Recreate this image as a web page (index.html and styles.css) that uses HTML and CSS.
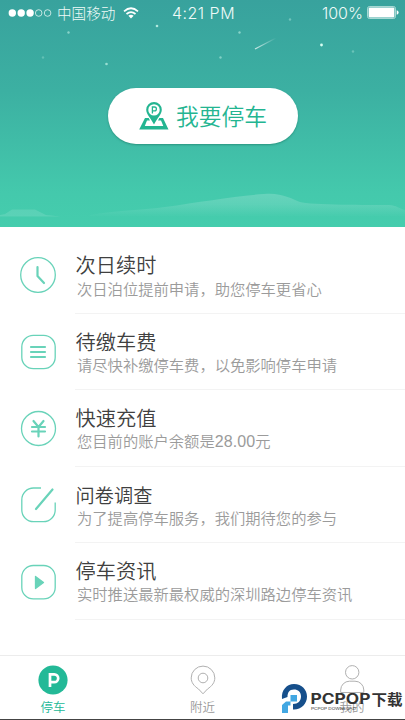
FILE: index.html
```
<!DOCTYPE html>
<html lang="zh-CN">
<head>
<meta charset="utf-8">
<title>停车</title>
<link rel="stylesheet" href="styles.css">
</head>
<body>
<div class="app">
  <header class="hero">
    <svg class="scene" viewBox="0 0 405 227" aria-hidden="true">
      <defs>
        <linearGradient id="hill" gradientUnits="userSpaceOnUse" x1="0" y1="193" x2="0" y2="217">
          <stop offset="0" stop-color="#fff" stop-opacity=".19"/>
          <stop offset=".45" stop-color="#fff" stop-opacity=".14"/>
          <stop offset="1" stop-color="#fff" stop-opacity="0"/>
        </linearGradient>
        <linearGradient id="trail" gradientUnits="userSpaceOnUse" x1="255" y1="49" x2="276" y2="38">
          <stop offset="0" stop-color="#fff" stop-opacity=".75"/>
          <stop offset="1" stop-color="#fff" stop-opacity="0"/>
        </linearGradient>
      </defs>
      <path d="M90 215C120 210 145 210 165 207C200 202 235 196 264 194C280 192 293 199 300 202C310 205 370 205 389 205C396 205 400 209 405 210V218H90Z" fill="url(#hill)"/>
      <path d="M0 215L5 214L12 209.500H35L46 215L61 216.500H0Z" fill="#fff" opacity=".12"/>
      <path d="M255 49L276 38" stroke="url(#trail)" stroke-width="1.200"/>
      <g fill="#d9fff3">
        <circle cx="68.500" cy="32.500" r="1.200" opacity=".5"/>
        <circle cx="157" cy="26" r="1.300" opacity=".75"/>
        <circle cx="106.500" cy="64" r="1.300" opacity=".6"/>
        <circle cx="43" cy="57.500" r="1.200" opacity=".25"/>
        <circle cx="239.500" cy="32.500" r="1.200" opacity=".5"/>
        <circle cx="290" cy="19.500" r="1.200" opacity=".35"/>
        <circle cx="220.500" cy="57.500" r="1.200" opacity=".45"/>
        <circle cx="321.500" cy="45" r="1.400"/>
        <circle cx="353" cy="51.500" r="1.200" opacity=".3"/>
      </g>
    </svg>
    <div class="status">
      <div class="carrier">
        <svg width="44" height="10" viewBox="0 0 44 10"><g fill="#fff"><circle cx="4.300" cy="5" r="3.700"/><circle cx="13.200" cy="5" r="3.700"/><circle cx="22.100" cy="5" r="3.700"/></g><g fill="none" stroke="#e6f5f3" stroke-width=".8"><circle cx="30.700" cy="5" r="3.300"/><circle cx="39.600" cy="5" r="3.300"/></g></svg>
        <span class="carrier-name">中国移动</span>
        <svg width="16" height="12" viewBox="0 0 16 12"><g fill="none" stroke="#fff" stroke-width="1.700"><path d="M1 4.300Q8 -1.800 15 4.300"/><path d="M3.500 7Q8 3.200 12.500 7"/></g><path d="M5.400 8.800Q8 6.700 10.600 8.800L8 11.600Z" fill="#fff"/></svg>
      </div>
      <span class="clock">4:21 PM</span>
      <div class="power">
        <span>100%</span>
        <svg width="32" height="13" viewBox="0 0 32 13"><rect x=".5" y=".5" width="28" height="12" rx="2" fill="none" stroke="#d5efeb" stroke-width=".7"/><rect x="1.600" y="1.600" width="25.800" height="9.800" rx="1" fill="#fff"/><path d="M29.700 4.200Q31.600 4.600 31.600 6.500T29.700 8.800Z" fill="#fff"/></svg>
      </div>
    </div>
    <button class="park">
      <svg width="30" height="28" viewBox="0 0 30 28"><path d="M6 16H9.700L11 18.500H8L5.800 24H24.300L22 18.500H19L20.300 16H24L29.500 27.500H.2Z" fill="#23b591"/><path fill-rule="evenodd" d="M15 0A7.800 7.800 0 0 0 7.200 7.800C7.200 12.800 12.300 16.800 15 22.500C17.700 16.800 22.800 12.800 22.800 7.800A7.800 7.800 0 0 0 15 0ZM15 2.200A5.700 5.700 0 1 1 15 13.600A5.700 5.700 0 0 1 15 2.200Z" fill="#23b591"/><path d="M13.400 11.500V5H15.500A1.900 1.900 0 0 1 15.500 8.800H13.400" fill="none" stroke="#23b591" stroke-width="1.300"/></svg>
      <span>我要停车</span>
    </button>
  </header>

  <main class="list">
    <section class="row first">
      <svg class="icon" viewBox="0 0 38 38"><circle cx="19" cy="19" r="17.300"/><path class="bold" d="M18.500 11V20L25 27"/></svg>
      <div class="copy"><h2>次日续时</h2><p>次日泊位提前申请，助您停车更省心</p></div>
    </section>
    <section class="row">
      <svg class="icon" viewBox="0 0 38 38"><rect x="2.800" y="3.300" width="33.400" height="33.400" rx="11.500"/><path class="bold" d="M12 15H26M12 20H26M12 25H26"/></svg>
      <div class="copy"><h2>待缴车费</h2><p>请尽快补缴停车费，以免影响停车申请</p></div>
    </section>
    <section class="row">
      <svg class="icon" viewBox="0 0 38 38"><circle cx="19.500" cy="19.500" r="17"/><path class="bold" d="M14.500 12L19.500 18L24.500 12M13 18H26M13 22.500H26M19.500 18V27.500"/></svg>
      <div class="copy"><h2>快速充值</h2><p>您目前的账户余额是<span class="amount">28.00</span>元</p></div>
    </section>
    <section class="row">
      <svg class="icon" viewBox="0 0 38 38"><path d="M22 3H14.500A11.700 11.700 0 0 0 2.800 14.700V25A11.700 11.700 0 0 0 14.500 36.700H24.500A11.700 11.700 0 0 0 36.200 25V17.500"/><path class="bold" d="M17 24L33.500 4.500"/></svg>
      <div class="copy"><h2 class="narrow">问卷调查</h2><p>为了提高停车服务，我们期待您的参与</p></div>
    </section>
    <section class="row">
      <svg class="icon" viewBox="0 0 38 38"><rect x="2.800" y="3.500" width="33.400" height="33.400" rx="11.500"/><path d="M16.500 14.500V26.500L24.500 20.500Z" class="solid"/></svg>
      <div class="copy"><h2>停车资讯</h2><p>实时推送最新最权威的深圳路边停车资讯</p></div>
    </section>
  </main>

  <nav class="tabs">
    <a class="tab active">
      <svg width="30" height="30" viewBox="0 0 30 30"><circle cx="15" cy="15" r="14.600" fill="#23b997"/><path d="M12 22V9.300H16.300A3.900 3.900 0 0 1 16.300 17.100H12" fill="none" stroke="#fff" stroke-width="2.700"/></svg>
      <span>停车</span>
    </a>
    <a class="tab">
      <svg width="30" height="30" viewBox="0 0 30 30"><g fill="none" stroke="#b0b0b0"><path d="M15 28.800L10.500 24C6 21 3.200 17.500 3.200 12.900A11.800 11.800 0 0 1 26.800 12.900C26.800 17.500 24 21 19.500 24Z"/><circle cx="15" cy="13" r="4.800"/></g></svg>
      <span>附近</span>
    </a>
    <a class="tab">
      <svg width="30" height="30" viewBox="0 0 30 30"><g fill="none" stroke="#b0b0b0"><circle cx="15.200" cy="7.300" r="6.700"/><path d="M3.700 27.500V25A8.800 8.800 0 0 1 12.500 16.200H18A8.800 8.800 0 0 1 26.800 25V27.500Z"/></g></svg>
      <span>我的</span>
    </a>
  </nav>

  <svg class="brand" viewBox="0 0 125 34">
    <path fill-rule="evenodd" fill="#164f8b" d="M2 17C1 8 7 2 14 2C22 2 27 8 27 14.500C27 22 21 28 13 27.500V22C18 22 21 19 21 14.500C21 10 18 7.500 14 7.500C9 7.500 7.500 11 7.500 15Z"/>
    <path fill="#42a7e2" d="M10.500 13H17V19.500H10.500V23.500H8V31H2V23L6 19.500H10.500Z"/>
    <text class="brand-latin" x="30.500" y="22" textLength="60" lengthAdjust="spacingAndGlyphs">PCPOP</text>
    <text class="brand-cjk" x="91.500" y="22.500" textLength="31" lengthAdjust="spacingAndGlyphs">下载</text>
    <text class="brand-small" x="31" y="27.500" textLength="45" lengthAdjust="spacingAndGlyphs">PCPOP DOWNLOAD</text>
  </svg>
</div>
</body>
</html>
```
FILE: styles.css
```
* { box-sizing: border-box; }

body {
  margin: 0;
  background: #fff;
  font-family: "Noto Sans CJK SC", sans-serif;
  font-weight: 350;
}

.app {
  position: relative;
  display: flex;
  flex-direction: column;
  width: 405px;
  height: 720px;
  overflow: hidden;
  border-bottom: 1px solid #444;
}

.hero {
  position: relative;
  display: flex;
  flex-direction: column;
  align-items: center;
  height: 227px;
  flex: none;
  background: linear-gradient(#38a29d 0, #3cb0a2 40%, #44c9ac 85%, #45cdad 100%);
}

.scene {
  position: absolute;
  inset: 0;
  width: 405px;
  height: 227px;
}

.status {
  position: relative;
  display: grid;
  grid-template-columns: 1fr auto 1fr;
  align-items: center;
  width: 100%;
  height: 25px;
  padding: 0 6px 0 8px;
  color: #effaf8;
}

.carrier, .power { display: flex; align-items: center; }
.carrier-name { margin: 0 8px 0 5px; font-size: 14.6px; font-weight: 300; line-height: 20px; }
.clock, .power { font-family: Inter, "Liberation Sans", sans-serif; font-size: 16px; font-weight: 300; }
.clock { letter-spacing: .5px; }
.power { justify-content: flex-end; gap: 4px; }

.park {
  position: relative;
  display: flex;
  align-items: center;
  justify-content: center;
  gap: 7px;
  width: 190px;
  height: 56px;
  margin-top: 63px;
  padding: 0 0 1px 1px;
  border: 0;
  border-radius: 28px;
  background: #fff;
  box-shadow: 0 1px 2px rgba(20, 110, 90, .5);
  color: #23b591;
  font: 350 22.8px/32px "Noto Sans CJK SC", sans-serif;
}

.list { flex: 1; padding-top: 10px; }

.row {
  display: flex;
  height: 76.6px;
  padding-left: 19px;
}

.icon {
  flex: none;
  width: 38px;
  height: 38px;
  margin-top: 18.500px;
  fill: none;
  stroke: #69d3b9;
  stroke-width: 1.3;
}

.icon .bold { stroke-width: 2.2; stroke-linecap: round; stroke-linejoin: round; }
.icon .solid { fill: #69d3b9; stroke-linejoin: round; }

.copy {
  flex: 1;
  margin-left: 18px;
  padding: 14px 0 0;
  border-bottom: 1px solid #f3f3f3;
}

.copy h2 {
  margin: 0;
  padding-left: .6px;
  color: #404040;
  font-size: 20.2px;
  font-weight: 350;
  line-height: 28px;
}

.copy h2.narrow { font-size: 19.2px; }

.copy p {
  margin: -2px 0 0;
  padding-left: 2px;
  color: #9b9b9b;
  font-size: 15.3px;
  line-height: 21px;
  white-space: nowrap;
}

.first p { margin-top: -1px; }
.amount { font-family: "Liberation Sans", sans-serif; font-size: 16px; letter-spacing: .1px; }

.tabs {
  display: flex;
  justify-content: space-between;
  height: 64px;
  flex: none;
  padding: 9px 38px 0;
  border-top: 1px solid #ececec;
}

.tab {
  display: flex;
  flex-direction: column;
  align-items: center;
  width: 30px;
  color: #999;
  font-size: 12.5px;
  line-height: 20px;
  white-space: nowrap;
}

.tab span { margin-top: 1.5px; }
.tab.active { color: #23b997; }

.brand {
  position: absolute;
  left: 280px;
  top: 682px;
  width: 125px;
  height: 34px;
  fill: #333;
}

.brand-latin { font: 700 14px Inter, sans-serif; }
.brand-cjk { font: 700 14.5px "Noto Sans CJK SC", sans-serif; }
.brand-small { font: 400 3.5px Inter, sans-serif; }
```
